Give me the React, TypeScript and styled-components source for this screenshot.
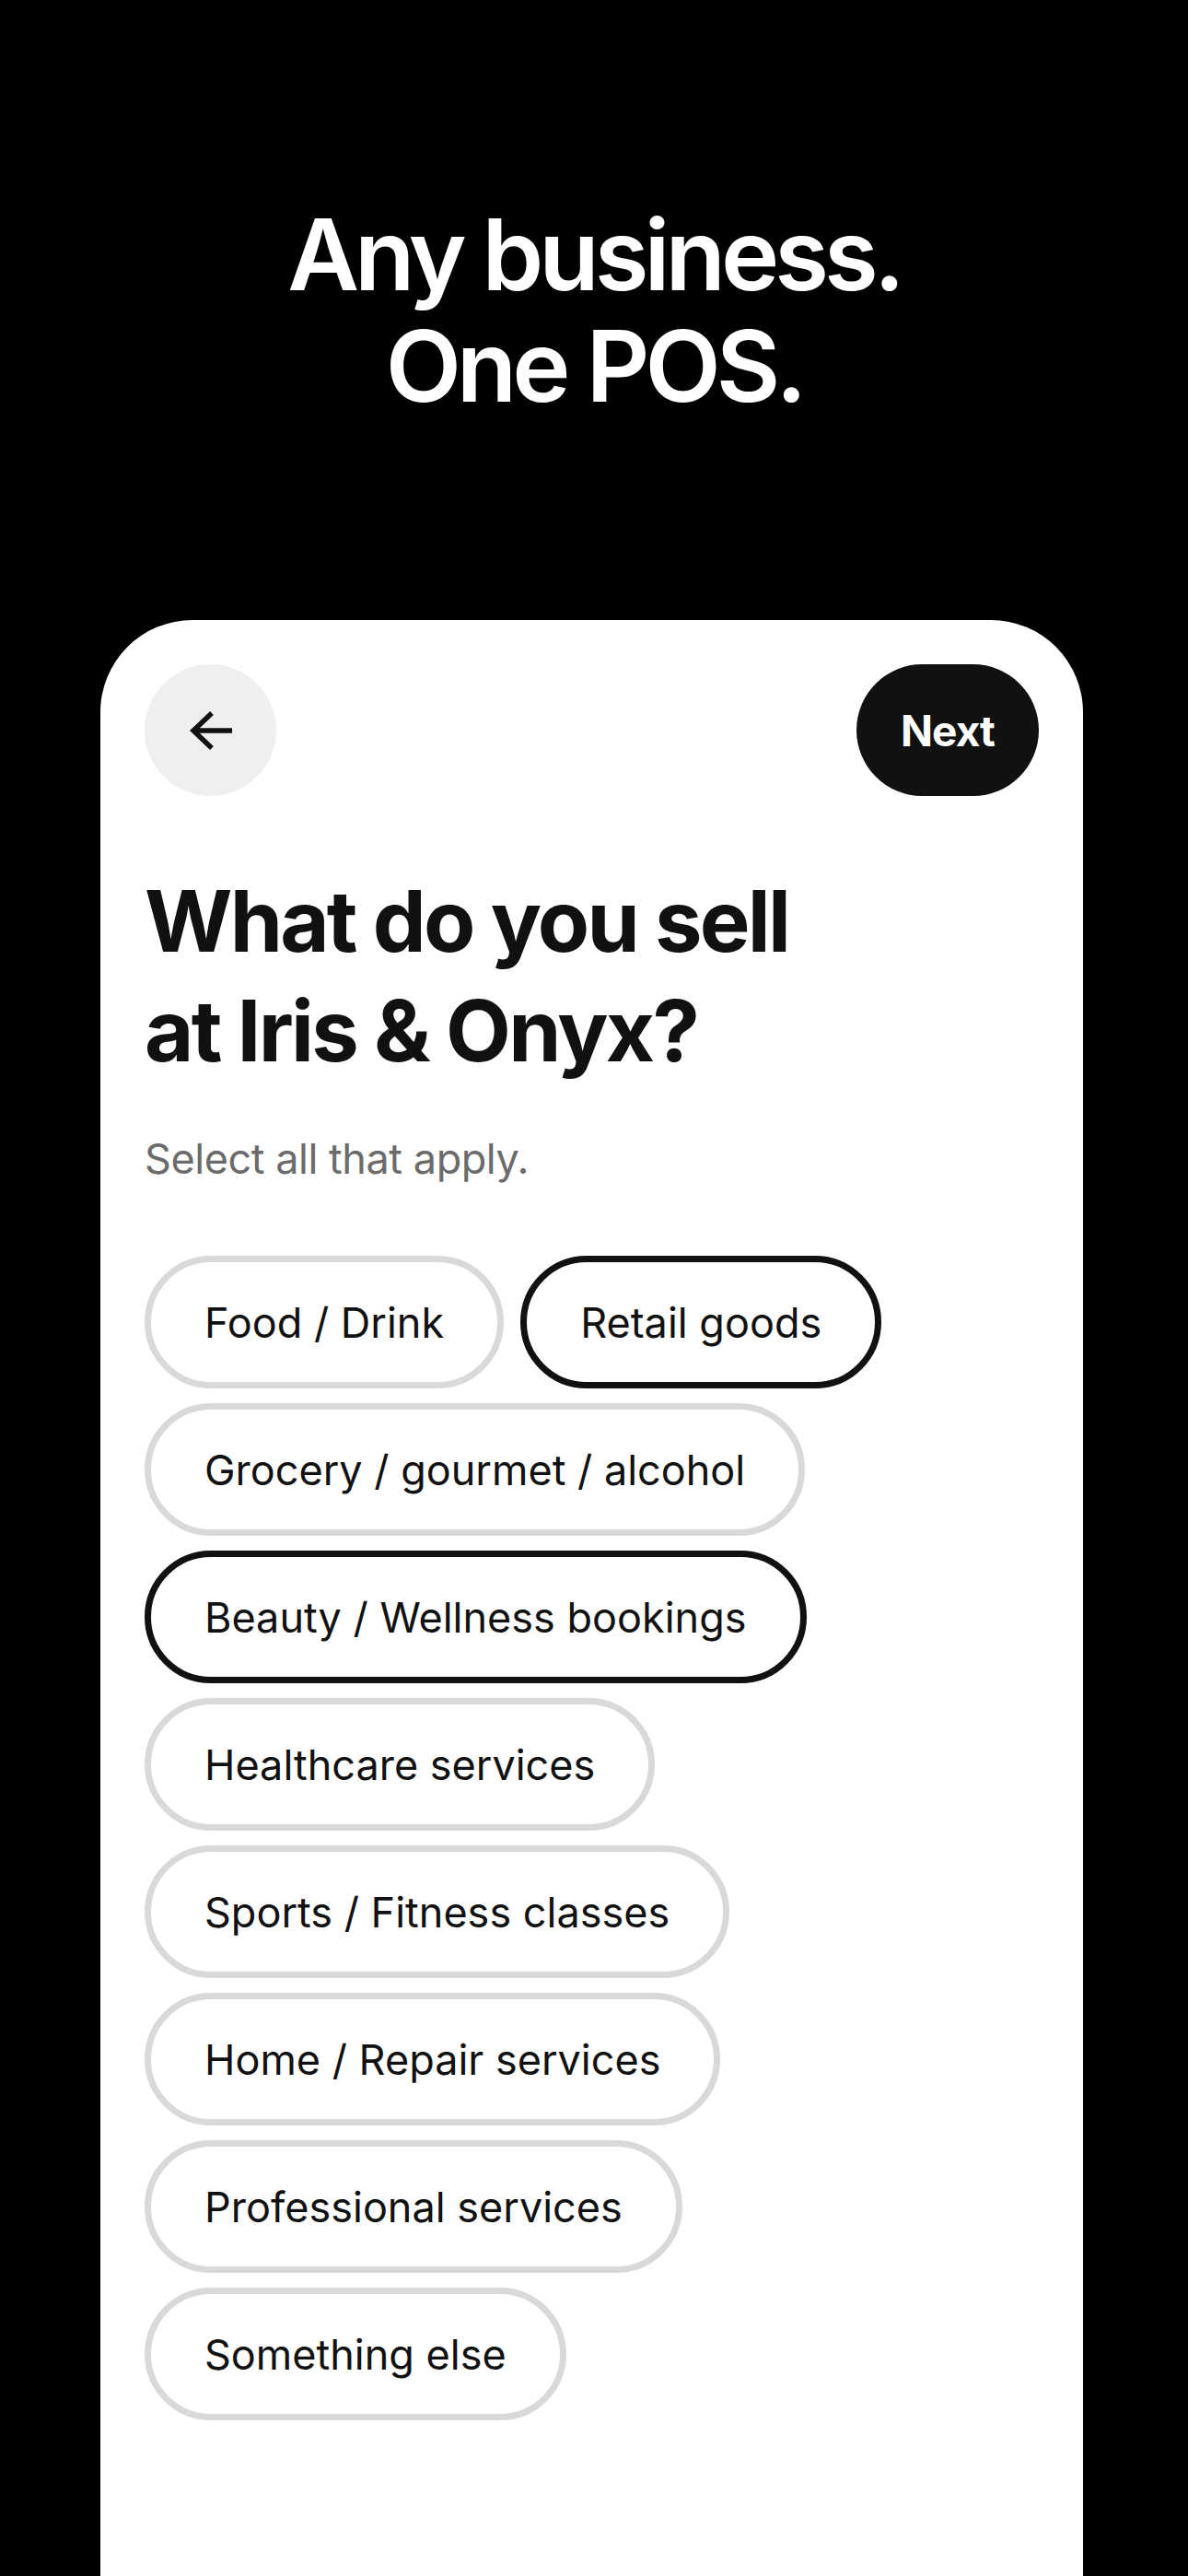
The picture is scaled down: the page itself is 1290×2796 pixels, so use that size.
import React from "react";
import styled, { createGlobalStyle } from "styled-components";

const Global = createGlobalStyle`
  html, body { margin: 0; padding: 0; background: #000; }
  body { font-family: Inter, "Noto Sans", "Liberation Sans", sans-serif; -webkit-font-smoothing: antialiased; }
  * { box-sizing: border-box; }
`;

const Page = styled.div`
  width: 1290px;
  height: 2796px;
  overflow: hidden;
  background: #000;
  display: flex;
  flex-direction: column;
  align-items: center;
  padding-top: 216px;
`;

const Headline = styled.h1`
  margin: 0;
  color: #fff;
  font-family: Inter, "Liberation Sans", sans-serif;
  font-weight: 600;
  font-size: 107px;
  line-height: 121px;
  letter-spacing: -0.047em;
  text-align: center;
`;

const Card = styled.section`
  margin-top: 215px;
  align-self: flex-start;
  margin-left: 109px;
  width: 1067px;
  flex: 1;
  background: #fff;
  border-radius: 100px 100px 0 0;
  padding: 48px;
  display: flex;
  flex-direction: column;
`;

const TopBar = styled.div`
  display: flex;
  justify-content: space-between;
  align-items: center;
  height: 143px;
`;

const BackButton = styled.button`
  width: 143px;
  height: 143px;
  border-radius: 50%;
  border: none;
  background: #efefef;
  display: flex;
  align-items: center;
  justify-content: center;
  padding: 0;
  color: #111;
`;

const NextButton = styled.button`
  height: 143px;
  padding: 0 48px;
  border-radius: 72px;
  border: none;
  background: #111;
  color: #fff;
  font-family: Inter, "Liberation Sans", sans-serif;
  font-weight: 700;
  font-size: 46px;
  letter-spacing: -0.02em;
`;

const Title = styled.h2`
  margin: 76px 0 0;
  color: #111;
  font-family: Inter, "Liberation Sans", sans-serif;
  font-weight: 700;
  font-size: 92px;
  line-height: 119px;
  letter-spacing: -0.03em;
`;

const Subtitle = styled.p`
  margin: 52px 0 0;
  color: #6b6b6b;
  font-family: Inter, "Liberation Sans", sans-serif;
  font-weight: 400;
  font-size: 45px;
  line-height: 56px;
  letter-spacing: -0.01em;
`;

const ChipList = styled.div`
  margin-top: 77px;
  display: flex;
  flex-wrap: wrap;
  gap: 16px 18px;
`;

const Chip = styled.button<{ $selected?: boolean }>`
  height: 144px;
  padding: 0 58px;
  border-radius: 72px;
  border: 7px solid ${(p) => (p.$selected ? "#111" : "#d9d9d9")};
  background: #fff;
  color: #111;
  font-family: Inter, "Liberation Sans", sans-serif;
  font-weight: 400;
  font-size: 45px;
  letter-spacing: 0;
  display: inline-flex;
  align-items: center;
  white-space: nowrap;
`;

const options: { label: string; selected?: boolean }[] = [
  { label: "Food / Drink" },
  { label: "Retail goods", selected: true },
  { label: "Grocery / gourmet / alcohol" },
  { label: "Beauty / Wellness bookings", selected: true },
  { label: "Healthcare services" },
  { label: "Sports / Fitness classes" },
  { label: "Home / Repair services" },
  { label: "Professional services" },
  { label: "Something else" },
];

const ArrowLeft = () => (
  <svg width="48" height="46" viewBox="0 0 48 46" fill="none">
    <path d="M5 23 H47" stroke="currentColor" strokeWidth="5.5" />
    <path d="M25 4 L5 23 L25 42" stroke="currentColor" strokeWidth="5.5" strokeLinejoin="miter" />
  </svg>
);

export default function App() {
  return (
    <>
      <Global />
      <Page>
        <Headline>
          Any business.
          <br />
          One POS.
        </Headline>
        <Card>
          <TopBar>
            <BackButton aria-label="Back">
              <ArrowLeft />
            </BackButton>
            <NextButton>Next</NextButton>
          </TopBar>
          <Title>
            What do you sell
            <br />
            at Iris &amp; Onyx?
          </Title>
          <Subtitle>Select all that apply.</Subtitle>
          <ChipList>
            {options.map((o) => (
              <Chip key={o.label} $selected={o.selected}>
                {o.label}
              </Chip>
            ))}
          </ChipList>
        </Card>
      </Page>
    </>
  );
}
